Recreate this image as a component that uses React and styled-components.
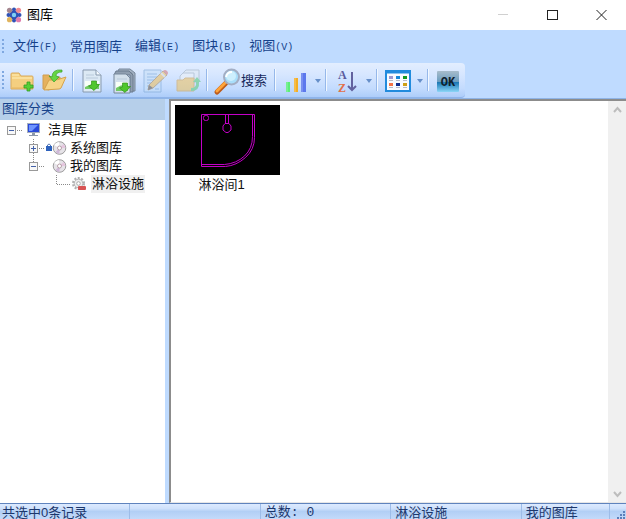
import React, { useState } from "react"
import styled, { createGlobalStyle, ThemeProvider } from "styled-components"

const theme = {
  colors: {
    frame: "#bfdbff",
    text: "#15428b",
    ink: "#111",
    line: "#8c8c8c",
    selected: "#f0f0f0",
  },
  fonts: {
    ui: '"Liberation Sans", "Noto Sans CJK SC", sans-serif',
    mono: '"Liberation Mono", "Noto Sans CJK SC", monospace',
  },
  fontSizes: {
    small: "10px",
    medium: "13px",
  },
}

const GlobalStyle = createGlobalStyle`
  * {
    box-sizing: border-box;
  }

  body {
    margin: 0;
    font-family: ${({ theme }) => theme.fonts.ui};
    font-size: ${({ theme }) => theme.fontSizes.medium};
    line-height: 18px;
  }

  button {
    margin: 0;
    padding: 0;
    border: none;
    background: none;
    color: inherit;
    font: inherit;
  }

  svg {
    display: block;
    flex: none;
    overflow: visible;
  }
`

const Window = styled.div`
  display: flex;
  flex-direction: column;
  height: 100vh;
  overflow: hidden;
  background: ${({ theme }) => theme.colors.frame};
`

const TitleBar = styled.header`
  display: flex;
  align-items: center;
  flex: none;
  gap: 5px;
  height: 30px;
  padding-left: 6px;
  background: #fff;
`

const Title = styled.h1`
  flex: 1;
  margin: 0;
  font-size: ${({ theme }) => theme.fontSizes.medium};
  font-weight: normal;
  color: #000;
`

const WindowButtons = styled.div`
  display: flex;
`

const WindowButton = styled.button`
  display: flex;
  align-items: center;
  justify-content: center;
  width: 49px;
  height: 30px;
`

const MenuBar = styled.nav`
  display: flex;
  align-items: center;
  flex: none;
  gap: 13px;
  height: 33px;
`

const Grip = styled.span`
  width: 2px;
  height: ${({ $height }) => $height}px;
  margin-left: 2px;
  margin-right: ${({ $gap }) => $gap}px;
  background: repeating-linear-gradient(#7fa8e0 0 2px, transparent 2px 4px);
`

const MenuItem = styled.button`
  color: ${({ theme }) => theme.colors.text};
  white-space: nowrap;
`

const MenuKey = styled.span`
  font-family: ${({ theme }) => theme.fonts.mono};
  font-size: ${({ theme }) => theme.fontSizes.small};
`

const ToolBar = styled.div`
  display: flex;
  align-items: center;
  align-self: flex-start;
  flex: none;
  height: 35px;
  border-radius: 0 4px 4px 0;
  border-bottom: 1px solid #8fb4ea;
  background: linear-gradient(#e3eeff, #d6e6ff 35%, #c3dbfe 75%, #adcdf9);
`

const ToolButton = styled.button`
  display: flex;
  align-items: center;
  justify-content: center;
  width: ${({ $width }) => $width || 32}px;
  height: 34px;
  padding-top: 2px;
  color: #16295c;
  white-space: nowrap;

  &:disabled svg {
    opacity: 0.55;
  }
`

const Separator = styled.span`
  flex: none;
  width: 2px;
  height: 22px;
  margin: 0 2px;
  border-left: 1px solid #96b8ea;
  border-right: 1px solid #f2f8ff;
`

const Body = styled.main`
  display: grid;
  grid-template-columns: minmax(120px, 27%) 1fr;
  flex: 1;
  min-height: 0;
  border-top: 1px solid #8fb4e6;
`

const Sidebar = styled.aside`
  display: flex;
  flex-direction: column;
  margin-right: 4px;
  background: #fff;
`

const SidebarHeading = styled.h2`
  margin: 0;
  padding: 1px 2px 2px;
  font-size: ${({ theme }) => theme.fontSizes.medium};
  font-weight: normal;
  color: ${({ theme }) => theme.colors.text};
  background: #b6cfea;
`

const Tree = styled.ul`
  margin: 0;
  padding: 1px 0 0;
  list-style: none;
`

const TreeRow = styled.li`
  display: flex;
  align-items: center;
  height: 18px;
  padding-left: ${({ $level }) => 7 + $level * 22}px;
`

const TreeLabel = styled.span`
  padding: 0 1px;
  color: ${({ theme }) => theme.colors.ink};
  background: ${({ theme, $selected }) =>
    $selected ? theme.colors.selected : "none"};
  white-space: nowrap;
`

const Content = styled.section`
  display: flex;
  min-width: 0;
  border: 1px solid #e6e6e6;
  border-top: 2px solid ${({ theme }) => theme.colors.line};
  border-left: 2px solid ${({ theme }) => theme.colors.line};
  border-right: none;
  background: #fff;
`

const Gallery = styled.div`
  display: flex;
  flex-wrap: wrap;
  align-content: flex-start;
  flex: 1;
  gap: 8px;
  padding: 4px;
`

const Item = styled.figure`
  margin: 0;
`

const Thumb = styled.div`
  width: 105px;
  height: 70px;
  background: #000;
`

const Caption = styled.figcaption`
  padding: 1px 12px 0 0;
  color: ${({ theme }) => theme.colors.ink};
  text-align: center;
`

const ScrollBar = styled.div`
  display: flex;
  flex-direction: column;
  justify-content: space-between;
  width: 18px;
  background: #f0f0f0;
`

const ScrollButton = styled.button`
  display: flex;
  align-items: center;
  justify-content: center;
  height: 17px;
`

const StatusBar = styled.footer`
  display: grid;
  grid-template-columns: repeat(4, 130fr) 88fr 16px;
  flex: none;
  height: 16px;
  border-top: 1px solid #5f83bd;
  background: linear-gradient(#dceaff, #cfe1fb 30%, #b2cff5 50%, #c3dafa);
`

const StatusCell = styled.div`
  overflow: hidden;
  padding-left: ${({ $first }) => ($first ? 2 : 4)}px;
  border-right: 1px solid #9dbce8;
  font-family: ${({ $mono, theme }) =>
    $mono ? theme.fonts.mono : theme.fonts.ui};
  color: #1c376c;
  white-space: pre;
`

const AppIcon = () => (
  <svg width="16" height="16" viewBox="0 0 16 16">
    <g fill="#3052b5">
      <circle cx="8" cy="2.5" r="2" />
      <circle cx="2.500" cy="8" r="2" />
      <circle cx="13.500" cy="8" r="2" />
      <circle cx="8" cy="13.500" r="2" />
      <circle cx="8" cy="8" r="4.500" />
    </g>
    <circle cx="3.500" cy="3.300" r="2.600" fill="#a58790" />
    <circle cx="12.500" cy="3.300" r="2.600" fill="#ef8a91" />
    <circle cx="3.500" cy="12.700" r="2.600" fill="#e0b45e" />
    <circle cx="12.500" cy="12.700" r="2.600" fill="#e07cae" />
    <circle cx="8" cy="8" r="2.200" fill="#7fd0f5" />
  </svg>
)

const GreenArrow = ({ x, y }) => (
  <path
    transform={`translate(${x} ${y})`}
    d="M3.500 0h5v3.500h3L6 9.500.5 5l3-1z"
    fill="#4fc72c"
    stroke="#35941d"
    strokeWidth=".7"
  />
)

const NewFolderIcon = () => (
  <svg width="26" height="26" viewBox="0 0 26 26">
    <path
      d="M2 21V6q0-1 1-1h7l2 3h11q1 0 1 1v12z"
      fill="#f4cf80"
      stroke="#d9ab5c"
    />
    <path d="M3 10h20M3 7h7" stroke="#fff0bb" />
    <path d="M3 20h20" stroke="#e7b55f" />
    <path
      d="M18 14h3v3h3v3h-3v3h-3v-3h-3v-3h3z"
      fill="#57cf35"
      stroke="#359c25"
      strokeWidth=".8"
    />
  </svg>
)

const OpenFolderIcon = () => (
  <svg width="26" height="26" viewBox="0 0 26 26">
    <path d="M2 21V7h6l2 2h9v5L8 22z" fill="#e5b15d" stroke="#cf9d50" />
    <path d="M3 22l5-10q8 1 17-3l-5 11q-1 1-2 1z" fill="#f6d487" stroke="#d5a24c" />
    <path
      d="M21 2Q11 1 11 9L8 8l5 6 5-5-3-1q0-4 6-4z"
      fill="#66d544"
      stroke="#3d9f2b"
      strokeWidth=".7"
    />
  </svg>
)

const ImportIcon = () => (
  <svg width="24" height="26" viewBox="0 0 24 26">
    <path d="M3 2h13l5 5v17H3z" fill="#dce9f4" stroke="#8799ae" />
    <path d="M5 13h14v8H5z" fill="#72ca64" />
    <path d="M5 13h14v3q-7-1-14 3z" fill="#f8fff6" />
    <path d="M6 7h8M6 10h12" stroke="#b9cadb" />
    <path d="M16 2v5h5" fill="#f5fbff" stroke="#8799ae" />
    <GreenArrow x={8} y={13} />
  </svg>
)

const ImportAllIcon = () => (
  <svg width="24" height="26" viewBox="0 0 24 26">
    <path d="M7 1h11l5 4v18h-3V5H5z" fill="#a3b1c2" stroke="#76879a" />
    <path d="M4 3h13l4 4v17h-3V7H2z" fill="#8f9eb0" stroke="#6b7b8e" />
    <path d="M2 6h12l4 4v15H2z" fill="#d3e0ec" stroke="#76879b" />
    <path d="M4 14h12v9H4z" fill="#72ca64" />
    <path d="M4 14h12v3q-6-1-12 3z" fill="#f8fff6" />
    <path d="M5 11h10" stroke="#b9cadb" />
    <GreenArrow x={7} y={15} />
  </svg>
)

const EditIcon = () => (
  <svg width="26" height="26" viewBox="0 0 26 26">
    <path d="M1 2h17v22H1z" fill="#c5def7" stroke="#75a0d0" />
    <path
      d="M4 6h10M4 9h10M4 12h8M4 15h6M4 18h4M12 21h4"
      stroke="#72a1d3"
    />
    <path d="M5 22l1-5L20 3l4 4L10 20z" fill="#efbd56" stroke="#a18456" />
    <path d="M20 3q2-2 4 0t0 4z" fill="#d27378" />
    <path d="M18 5l4 4" stroke="#ddd" strokeWidth="2" />
    <path d="M5 22l1-5 4 3z" fill="#5c5148" />
  </svg>
)

const MoveIcon = () => (
  <svg width="26" height="26" viewBox="0 0 26 26">
    <path d="M11 2h13v12H8V5z" fill="#e3ebf2" stroke="#a0afbd" />
    <path d="M8 5h11v10H5V8z" fill="#eef2f5" stroke="#a0afbd" />
    <path d="M2 23V12h6l2-2h9v13z" fill="#f2c25a" stroke="#d3a04a" />
    <path
      d="M16 20q6 0 5-6h-3l4-5 4 5h-2q1 9-8 9z"
      fill="#58cb75"
    />
  </svg>
)

const SearchIcon = () => (
  <svg width="26" height="26" viewBox="0 0 26 26">
    <path d="M2 24l9-9" stroke="#bd5b1b" strokeWidth="5" strokeLinecap="round" />
    <path d="M2 23l8-8" stroke="#ffa439" strokeWidth="3" strokeLinecap="round" />
    <circle cx="16.500" cy="9" r="7.500" fill="#a9defa" stroke="#a3aec4" strokeWidth="2" />
    <circle cx="16" cy="8" r="5" fill="#cdeffd" />
    <path d="M11 9q1-5 6-5" fill="none" stroke="#fff" strokeWidth="2" />
  </svg>
)

const ChartIcon = () => (
  <svg width="22" height="24" viewBox="0 0 22 24">
    <path d="M1 13h4v10H1z" fill="#5ced7a" />
    <path d="M9 9h4v14H9z" fill="#f3ae27" />
    <path d="M16 4h5v19h-5z" fill="#5c78ed" />
    <path d="M2 13v10M10 9v14M17 4v19" stroke="#fff" strokeOpacity=".35" />
  </svg>
)

const SortIcon = () => (
  <svg width="20" height="24" viewBox="0 0 20 24">
    <text
      x="1"
      y="10"
      fontFamily="Liberation Serif, serif"
      fontSize="12"
      fontWeight="bold"
      fill="#5b5c9d"
    >
      A
    </text>
    <text
      x="1"
      y="23"
      fontFamily="Liberation Serif, serif"
      fontSize="12"
      fontWeight="bold"
      fill="#e27049"
    >
      Z
    </text>
    <path
      d="M15 3v18M11 17l4 4 4-4"
      fill="none"
      stroke="#62629f"
      strokeWidth="2"
    />
  </svg>
)

const swatches = ["#9e98cf", "#1688d8", "#119a22", "#f47345", "#112f8e", "#cda016"]

const ViewIcon = () => (
  <svg width="26" height="22" viewBox="0 0 26 22">
    <rect x="1" y="1" width="24" height="20" fill="#f8fbff" stroke="#218bdd" strokeWidth="2" />
    <path d="M1 2h24" stroke="#218bdd" strokeWidth="3" />
    {swatches.map((color, i) => (
      <g key={color}>
        <rect
          x={4 + (i % 3) * 7}
          y={i < 3 ? 6 : 13}
          width="4"
          height="3"
          fill={color}
        />
        <rect
          x={4 + (i % 3) * 7}
          y={i < 3 ? 10 : 17}
          width="4"
          height="1"
          fill="#b9bdc7"
        />
      </g>
    ))}
  </svg>
)

const OkIcon = () => (
  <svg width="22" height="21" viewBox="0 0 22 21">
    <defs>
      <linearGradient id="ok" x2="0" y2="1">
        <stop offset="0" stopColor="#a8bccb" />
        <stop offset=".5" stopColor="#6b9dc0" />
        <stop offset=".55" stopColor="#1b78b5" />
        <stop offset="1" stopColor="#8bd6f7" />
      </linearGradient>
    </defs>
    <rect width="22" height="21" rx="1" fill="url(#ok)" />
    <text
      x="11"
      y="15"
      textAnchor="middle"
      fontFamily="Liberation Mono, monospace"
      fontSize="12"
      fontWeight="bold"
      fill="#10202c"
    >
      OK
    </text>
  </svg>
)

const Caret = () => (
  <svg width="7" height="4" viewBox="0 0 7 4">
    <path d="M0 0h6L3 4z" fill="#668fc9" />
  </svg>
)

// Dotted connector lines, one cell per tree row
const Branch = ({ kind, open, above, below, onClick }) => {
  if (kind === "leaf") {
    return (
      <svg width="16" height="18" viewBox="0 0 16 18" aria-hidden="true">
        <path
          d="M5.500 0v9M6 9.500h13"
          fill="none"
          stroke="#8a8a8a"
          strokeDasharray="1 1"
        />
      </svg>
    )
  }
  return (
    <button aria-label={open ? "收起" : "展开"} onClick={onClick}>
      <svg width="16" height="18" viewBox="0 0 16 18">
        <g stroke="#8a8a8a" strokeDasharray="1 1">
          <path d="M10 9.500h6" />
          {above && <path d="M4.500 0v5" />}
          {below && <path d="M4.500 14v4" />}
        </g>
        <rect x=".5" y="5.500" width="8" height="8" fill="#f8f8f8" stroke="#999" />
        <path
          d={open ? "M2 9.500h5" : "M2 9.500h5M4.500 7v5"}
          stroke="#4260a8"
        />
      </svg>
    </button>
  )
}

const MonitorIcon = () => (
  <svg width="24" height="16" viewBox="0 0 24 16">
    <rect x="4.500" y="1.500" width="12" height="9" fill="#2949d8" stroke="#a3adbd" />
    <path d="M6 3h9L9 9H6z" fill="#6e94ff" />
    <path d="M9 11h3v2h3v1H6v-1h3z" fill="#8c98aa" />
  </svg>
)

const DiscIcon = ({ locked }) => (
  <svg width="24" height="16" viewBox="0 0 24 16">
    {locked && (
      <>
        <path d="M2.500 7V5q1.500-2 3 0v2" fill="none" stroke="#5577b4" />
        <rect x="1" y="6" width="6" height="5" fill="#2e62bd" />
      </>
    )}
    <circle cx="14.500" cy="8" r="6.300" fill="#e6e3e8" stroke="#888" strokeWidth=".8" />
    <path d="M14.500 8L9 5q2-3 5-3z" fill="#fff" />
    <path d="M14.500 8l4-4q2 2 2 4z" fill="#e5c7df" />
    <path d="M14.500 8l-4 4q2 2 4 2z" fill="#cfb9d9" />
    <circle cx="14.500" cy="8" r="2" fill="#fff" stroke="#a78b96" strokeWidth=".8" />
  </svg>
)

const GearIcon = () => (
  <svg width="24" height="16" viewBox="0 0 24 16">
    <circle
      cx="11.500"
      cy="7.500"
      r="5.500"
      fill="none"
      stroke="#b0b0b0"
      strokeWidth="2"
      strokeDasharray="2 1.500"
    />
    <circle cx="11.500" cy="7.500" r="4.300" fill="#eee" stroke="#a5a5a5" strokeWidth=".8" />
    <circle cx="11.500" cy="7.500" r="1.800" fill="#fff" stroke="#999" strokeWidth=".8" />
    <rect x="11" y="10" width="8" height="4" rx="1" fill="#d85353" />
  </svg>
)

const ShowerDrawing = () => (
  <svg width="105" height="70" viewBox="0 0 105 70" role="img" aria-label="淋浴间1">
    <g fill="none" stroke="#c400c8">
      <path d="M26.500 9.500h53v23q0 12-9 20t-20 9h-24z" />
      <path d="M77.500 9.500v22q0 12-8 19.500t-20 8.500h-23" />
      <path d="M50.500 9.500v9M53.500 9.500v9" />
      <path d="M50 18.500h4l2 2.500v4l-3 2.500h-2l-3-2.500v-4z" />
      <rect x="28.500" y="10.500" width="5" height="5" rx="2" />
    </g>
  </svg>
)

const menus = [
  ["文件", "F"],
  ["常用图库"],
  ["编辑", "E"],
  ["图块", "B"],
  ["视图", "V"],
]

const SplitButton = ({ label, children }) => (
  <>
    <ToolButton $width={36} aria-label={label}>
      {children}
    </ToolButton>
    <ToolButton $width={9} aria-label={`${label}选项`}>
      <Caret />
    </ToolButton>
  </>
)

const App = () => {
  const [rootOpen, setRootOpen] = useState(true)
  const [mineOpen, setMineOpen] = useState(true)

  return (
    <ThemeProvider theme={theme}>
      <GlobalStyle />
      <Window>
        <TitleBar>
          <AppIcon />
          <Title>图库</Title>
          <WindowButtons>
            <WindowButton aria-label="最小化" disabled>
              <svg width="11" height="11">
                <path d="M0 4.500h10" stroke="#d0d0d0" />
              </svg>
            </WindowButton>
            <WindowButton aria-label="最大化">
              <svg width="11" height="11">
                <rect x=".5" y=".5" width="10" height="9" fill="none" stroke="#222" />
              </svg>
            </WindowButton>
            <WindowButton aria-label="关闭">
              <svg width="11" height="11">
                <path d="M.5 0l10 10M10.500 0l-10 10" stroke="#222" />
              </svg>
            </WindowButton>
          </WindowButtons>
        </TitleBar>

        <MenuBar>
          <Grip $height={15} $gap={-4} />
          {menus.map(([name, key]) => (
            <MenuItem key={name}>
              {name}
              {key && <MenuKey>({key})</MenuKey>}
            </MenuItem>
          ))}
        </MenuBar>

        <ToolBar role="toolbar">
          <Grip $height={19} $gap={2} />
          <ToolButton aria-label="新建">
            <NewFolderIcon />
          </ToolButton>
          <ToolButton aria-label="打开">
            <OpenFolderIcon />
          </ToolButton>
          <Separator />
          <ToolButton aria-label="导入">
            <ImportIcon />
          </ToolButton>
          <ToolButton aria-label="批量导入">
            <ImportAllIcon />
          </ToolButton>
          <ToolButton aria-label="编辑" disabled>
            <EditIcon />
          </ToolButton>
          <ToolButton aria-label="移动" disabled>
            <MoveIcon />
          </ToolButton>
          <Separator />
          <ToolButton $width={62}>
            <SearchIcon />
            搜索
          </ToolButton>
          <Separator />
          <SplitButton label="统计">
            <ChartIcon />
          </SplitButton>
          <Separator />
          <SplitButton label="排序">
            <SortIcon />
          </SplitButton>
          <Separator />
          <SplitButton label="视图">
            <ViewIcon />
          </SplitButton>
          <Separator />
          <ToolButton $width={34} aria-label="确定">
            <OkIcon />
          </ToolButton>
        </ToolBar>

        <Body>
          <Sidebar>
            <SidebarHeading>图库分类</SidebarHeading>
            <Tree role="tree">
              <TreeRow role="treeitem" $level={0}>
                <Branch open={rootOpen} onClick={() => setRootOpen(!rootOpen)} />
                <MonitorIcon />
                <TreeLabel>洁具库</TreeLabel>
              </TreeRow>
              {rootOpen && (
                <>
                  <TreeRow role="treeitem" $level={1}>
                    <Branch above below />
                    <DiscIcon locked />
                    <TreeLabel>系统图库</TreeLabel>
                  </TreeRow>
                  <TreeRow role="treeitem" $level={1}>
                    <Branch
                      above
                      open={mineOpen}
                      onClick={() => setMineOpen(!mineOpen)}
                    />
                    <DiscIcon />
                    <TreeLabel>我的图库</TreeLabel>
                  </TreeRow>
                  {mineOpen && (
                    <TreeRow role="treeitem" aria-selected="true" $level={2}>
                      <Branch kind="leaf" />
                      <GearIcon />
                      <TreeLabel $selected>淋浴设施</TreeLabel>
                    </TreeRow>
                  )}
                </>
              )}
            </Tree>
          </Sidebar>

          <Content>
            <Gallery>
              <Item>
                <Thumb>
                  <ShowerDrawing />
                </Thumb>
                <Caption>淋浴间1</Caption>
              </Item>
            </Gallery>
            <ScrollBar>
              <ScrollButton aria-label="向上">
                <svg width="9" height="6">
                  <path d="M1 5l3.500-4L8 5" fill="none" stroke="#bdbdbd" strokeWidth="2" />
                </svg>
              </ScrollButton>
              <ScrollButton aria-label="向下">
                <svg width="9" height="6">
                  <path d="M1 1l3.500 4L8 1" fill="none" stroke="#bdbdbd" strokeWidth="2" />
                </svg>
              </ScrollButton>
            </ScrollBar>
          </Content>
        </Body>

        <StatusBar>
          <StatusCell $first>共选中0条记录</StatusCell>
          <StatusCell />
          <StatusCell $mono>总数: 0</StatusCell>
          <StatusCell>淋浴设施</StatusCell>
          <StatusCell>我的图库</StatusCell>
          <svg width="16" height="16">
            <path
              d="M13 7h2v2h-2zM10 10h2v2h-2zM13 10h2v2h-2zM7 13h2v2H7zM10 13h2v2h-2zM13 13h2v2h-2z"
              fill="#5c80bb"
            />
          </svg>
        </StatusBar>
      </Window>
    </ThemeProvider>
  )
}

export default App
